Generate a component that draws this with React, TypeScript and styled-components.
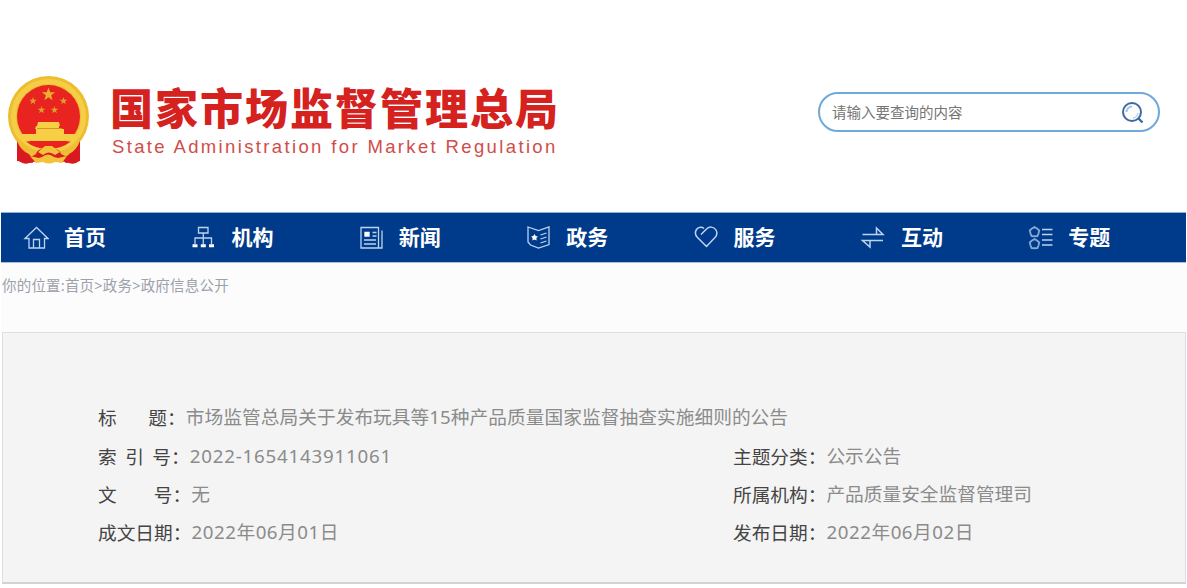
import React from 'react';
import styled, { createGlobalStyle } from 'styled-components';

const GlobalStyle = createGlobalStyle`
  * { box-sizing: border-box; }
  body {
    margin: 0;
    background: #fff;
    font-family: "Noto Sans", "Noto Sans CJK SC", sans-serif;
    overflow: hidden;
  }
`;

const Page = styled.div`
  width: 1187px;
  height: 588px;
  display: flex;
  flex-direction: column;
  overflow: hidden;
`;

const Header = styled.header`
  height: 212px;
  flex: none;
  display: flex;
  align-items: flex-start;
  justify-content: space-between;
  padding: 75px 27px 0 7px;
`;

const Brand = styled.div`
  display: flex;
  gap: 19px;
`;

const BrandText = styled.div`
  display: flex;
  flex-direction: column;
  padding-top: 8px;
  white-space: nowrap;
`;

const BrandName = styled.h1`
  margin: 0;
  font: 900 43px/46px "Noto Sans CJK SC", sans-serif;
  letter-spacing: 2px;
  color: #d5221f;
`;

const BrandSub = styled.p`
  margin: 6px 0 0 2px;
  font: 400 18.5px/24px "Liberation Sans", sans-serif;
  letter-spacing: 2.36px;
  color: #d04d49;
`;

const SearchBox = styled.label`
  display: flex;
  align-items: center;
  justify-content: space-between;
  width: 342px;
  height: 40px;
  margin-top: 17px;
  padding: 0 13px 0 12px;
  border: 2px solid #6fa9d9;
  border-radius: 20px;
`;

const SearchInput = styled.input`
  flex: 1;
  min-width: 0;
  padding: 0;
  border: 0;
  outline: 0;
  background: none;
  font: 400 14.5px/20px "Noto Sans CJK SC", sans-serif;
  &::placeholder { color: #757575; opacity: 1; }
`;

const Nav = styled.nav`
  flex: none;
  display: grid;
  grid-template-columns: repeat(7, 167.4px);
  height: 51px;
  margin: 0 1px;
  padding-left: 22px;
  background: #003b8b;
  border-top: 1px solid #8fb0d2;
  border-bottom: 1px solid #a9bcd8;
  overflow: hidden;
`;

const NavItem = styled.a`
  display: flex;
  align-items: center;
  gap: 15px;
  color: #fff;
  font: 700 21px/30px "Noto Sans CJK SC", sans-serif;
  white-space: nowrap;
`;

const NavText = styled.span`
  padding-bottom: 3px;
`;

const NavIcon = styled.svg`
  width: 26px;
  height: 26px;
  flex: none;
  fill: none;
  stroke: #bcd3ee;
  stroke-width: 1.3;
`;

const Crumbs = styled.div`
  flex: none;
  height: 69px;
  margin: 0 1px;
  padding: 12px 0 0 1px;
  background: #fcfcfc;
  color: #9ca1ab;
  font-size: 14.5px;
  line-height: 20px;
  letter-spacing: 0.2px;
  white-space: nowrap;
`;

const Panel = styled.main`
  flex: none;
  height: 252px;
  margin: 0 1px 0 2px;
  padding: 65px 0 0 95px;
  background: #f4f4f4;
  border: 1px solid #dcdeea;
  border-bottom: 2px solid #d3d3d3;
`;

const Record = styled.dl`
  margin: 0;
  display: grid;
  grid-template-columns: 635px 1fr;
  grid-auto-rows: 38.4px;
`;

const Field = styled.div<{ $wide?: boolean }>`
  display: flex;
  align-items: center;
  grid-column: ${p => (p.$wide ? '1 / -1' : 'auto')};
  font-size: 18.7px;
  line-height: 28px;
  white-space: nowrap;
`;

const Label = styled.dt<{ $gap?: number }>`
  color: #444;
  font-family: "Noto Sans CJK SC", sans-serif;
  word-spacing: ${p => p.$gap ?? 0}px;
`;

const Value = styled.dd<{ $tracking?: number }>`
  margin: 0;
  color: #8b8b8b;
  letter-spacing: ${p => p.$tracking ?? 0}px;
`;

const star = (cx: number, cy: number, r: number, inner = 0.4) =>
  Array.from({ length: 10 }, (_, i) => {
    const a = (Math.PI / 5) * i - Math.PI / 2;
    const d = i % 2 ? r * inner : r;
    return `${(cx + d * Math.cos(a)).toFixed(2)},${(cy + d * Math.sin(a)).toFixed(2)}`;
  }).join(' ');

const Emblem = () => (
  <svg width="84" height="90" viewBox="0 0 84 90">
    <path d="M11 63 L12 86 Q17 90 22 88 L34 85 L50 85 L62 88 Q68 90 72 86 L73 63Z" fill="#d91820" />
    <circle cx="41.5" cy="41.5" r="40.5" fill="#edbd2e" />
    <circle cx="41.5" cy="41.5" r="35" fill="none" stroke="#f5ce48" strokeWidth="5" />
    <circle cx="41.5" cy="41.5" r="31.5" fill="#e9231f" />
    <polygon points={star(41.5, 19.5, 7)} fill="#e8b32e" />
    <polygon points={star(26, 26, 4)} fill="#dfa02b" />
    <polygon points={star(56.5, 26, 4)} fill="#dfa02b" />
    <polygon points={star(34.5, 35, 4)} fill="#dfa02b" />
    <polygon points={star(47.5, 35, 4)} fill="#dfa02b" />
    <path d="M31 47h21l1 4h-1v3h5v5h11l3 4-3 3H15l-3-3 3-4h14v-5h-1l1-3h1z" fill="#f7cf45" />
    <path d="M30 53.5h25" stroke="#df8f24" strokeWidth="1" />
    <path d="M19 66.500H64Q54 74 41.500 74 28 74 19 66.500Z" fill="#e9231f" />
    <path d="M11 63Q25 77 34 76L30 82Q17 81 10 70ZM72 63Q60 77 49 76L53 82Q67 81 73 70Z" fill="#f0bd35" />
    <path d="M10 66Q10 79 10 86L26 88 22 79Q14 76 10 66ZM73 66Q73 79 73 86L58 88 62 79Q69 76 73 66Z" fill="#d91820" />
    <path d="M29 79Q31 72 41.5 75Q52 72 54 79L60 82 56 87 49 84H34L28 87 24 82Z" fill="#dc1c20" />
    <path d="M31 77 38 71H45L53 77 48 80Q41.500 75 36 80ZM23 81l9 2 3-1q6-5 12 0l4 1 9-2-5 7-7-1q-6 3-12 0l-7 1z" fill="#f3c23b" />
  </svg>
);

const SearchIcon = () => (
  <svg width="24" height="24" viewBox="0 0 24 24" fill="none">
    <circle cx="11" cy="12" r="9" stroke="#3e69a3" strokeWidth="2" />
    <path d="M5.500 12A5.500 5.500 0 0 1 11 6.500" stroke="#9fc3ea" strokeWidth="2" />
    <path d="M12 18A6 6 0 0 0 17 13" stroke="#b9d3ef" strokeWidth="1.500" />
    <path d="M17.500 18.500 21.500 22.500" stroke="#3e69a3" strokeWidth="2.400" />
  </svg>
);

const navItems: { label: string; icon: React.ReactNode }[] = [
  {
    label: '首页',
    icon: <path d="M2 13.500 13.500 2.500 25 13.500H21.500V23H6V13.500ZM10.500 23V14.500H16.500V23" />,
  },
  {
    label: '机构',
    icon: (
      <>
        <path d="M8.500 2.500h9.500v5.500H8.500zM13.300 8v11M5 19v-6h16.500v6" />
        <path d="M2.500 20.700h5M10.800 20.700h5M19 20.700h5" stroke="#fff" strokeWidth="3" />
      </>
    ),
  },
  {
    label: '新闻',
    icon: (
      <>
        <path d="M3 2.500h17.500V23H3zM24 5.500V23H19.500M14.500 7.500h4M14.500 11h4M6 15h12M6 19h12" />
        <path d="M7 7.500h4v3.500H7z" fill="#fff" stroke="#fff" />
      </>
    ),
  },
  {
    label: '政务',
    icon: (
      <>
        <path d="M3 2 13.500 5.500 24 2V19.500L13.500 23 5.500 20 3 17ZM15.500 10l6-2M15.500 14l6-2M15.500 18l6-2" />
        <polygon points={star(9.500, 12.500, 3.600, 0.55)} fill="#fff" stroke="none" />
      </>
    ),
  },
  {
    label: '服务',
    icon: <path d="M8 9.500 13 4.500C16 1 21 1.500 23 5 24.500 8 24 10.500 22 12.500L13.500 21.500 4.500 12.500C2 10 2 7 3.500 4.500 5.500 1.800 9 1.800 11 3.500" strokeWidth="1.5" />,
  },
  {
    label: '互动',
    icon: <path d="M2.500 9.500H23L16.500 3V9M23 15.500H2.500L10 22V16" strokeWidth="1.5" />,
  },
  {
    label: '专题',
    icon: (
      <>
        <polygon points={star(7.5, 7, 5, 0.85)} stroke="#84a9d3" strokeWidth="1.8" strokeLinejoin="round" />
        <polygon points={star(7.5, 19, 5, 0.85)} stroke="#84a9d3" strokeWidth="1.8" strokeLinejoin="round" />
        <path d="M15 4.500h10.500M15 9.500h10.500M15 15h10.500M15 20h10.500" strokeWidth="1.5" />
      </>
    ),
  },
];

type FieldData = { label: string; value: string; gap?: number; tracking?: number; wide?: boolean };

const fields: FieldData[] = [
  { label: '标 题：', value: '市场监管总局关于发布玩具等15种产品质量国家监督抽查实施细则的公告', gap: 27.5, tracking: 0.05, wide: true },
  { label: '索 引 号：', value: '2022-1654143911061', gap: 4.3, tracking: 0.8 },
  { label: '主题分类：', value: '公示公告' },
  { label: '文 号：', value: '无', gap: 33 },
  { label: '所属机构：', value: '产品质量安全监督管理司' },
  { label: '成文日期：', value: '2022年06月01日', tracking: 0.55 },
  { label: '发布日期：', value: '2022年06月02日', tracking: 0.55 },
];

export default function App() {
  return (
    <Page>
      <GlobalStyle />
      <Header>
        <Brand>
          <Emblem />
          <BrandText>
            <BrandName>国家市场监督管理总局</BrandName>
            <BrandSub>State Administration for Market Regulation</BrandSub>
          </BrandText>
        </Brand>
        <SearchBox>
          <SearchInput placeholder="请输入要查询的内容" />
          <SearchIcon />
        </SearchBox>
      </Header>
      <Nav>
        {navItems.map(item => (
          <NavItem key={item.label}>
            <NavIcon viewBox="0 0 26 26">{item.icon}</NavIcon>
            <NavText>{item.label}</NavText>
          </NavItem>
        ))}
      </Nav>
      <Crumbs>你的位置:首页&gt;政务&gt;政府信息公开</Crumbs>
      <Panel>
        <Record>
          {fields.map(f => (
            <Field key={f.label} $wide={f.wide}>
              <Label $gap={f.gap}>{f.label}</Label>
              <Value $tracking={f.tracking}>{f.value}</Value>
            </Field>
          ))}
        </Record>
      </Panel>
    </Page>
  );
}
